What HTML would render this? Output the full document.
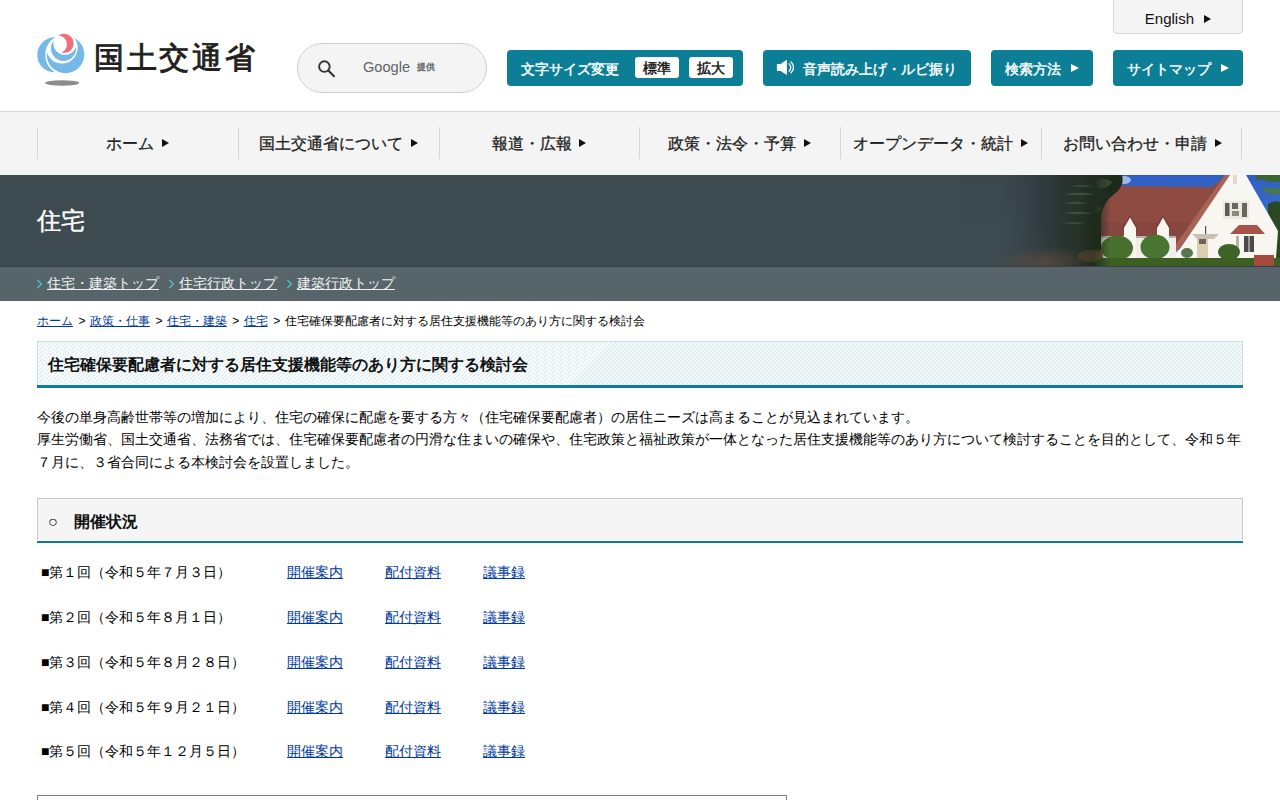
<!DOCTYPE html>
<html lang="ja"><head><meta charset="utf-8"><title>住宅確保要配慮者に対する居住支援機能等のあり方に関する検討会</title>
<style>
*{box-sizing:border-box;margin:0;padding:0}
html,body{width:1280px;height:800px;overflow:hidden;background:#fff}
body{font-family:"Liberation Sans",sans-serif;color:#222;position:relative}
a{color:#0039a0}
.abs{position:absolute}
/* header */
#hd{position:absolute;left:0;top:0;width:1280px;height:112px;border-bottom:1px solid #d6d6d6;background:#fff}
#eng{position:absolute;left:1113px;top:-1px;width:130px;height:35px;background:#f4f4f4;border:1px solid #d8d8d8;border-radius:0 0 4px 4px;font-size:15px;color:#111;text-align:center;line-height:38px}
.tri{display:inline-block;width:0;height:0;border-left:7px solid #111;border-top:4px solid transparent;border-bottom:4px solid transparent;vertical-align:middle}
#search{position:absolute;left:297px;top:43px;width:190px;height:50px;border:1px solid #cfcfcf;border-radius:25px;background:#f4f4f4}
.btn{position:absolute;top:50px;height:36px;background:#0c7e96;border-radius:4px;color:#fff;font-size:14px;font-weight:normal;-webkit-text-stroke:0.45px #fff;line-height:36px;white-space:nowrap}
.wb{position:absolute;top:7px;width:44px;height:21px;background:#fff;border-radius:3px;color:#111;-webkit-text-stroke:0.45px #111;line-height:22px;text-align:center}
/* nav */
#nav{position:absolute;left:0;top:112px;width:1280px;height:63px;background:#f4f4f4}
.sep{position:absolute;top:15px;width:1px;height:32px;background:#d4d4d4}
.ni{position:absolute;top:0;height:63px;line-height:63px;font-size:16px;color:#222;-webkit-text-stroke:0.3px #222;text-align:center;width:201px;white-space:nowrap}
/* banner */
#ban{position:absolute;left:0;top:175px;width:1280px;height:92px;background:#3d4a50;overflow:hidden}
#ban h1{position:absolute;left:37px;top:0;line-height:92px;font-size:24px;font-weight:normal;color:#fff;-webkit-text-stroke:0.4px #fff}
#sub{position:absolute;left:0;top:267px;width:1280px;height:34px;background:#57656b}
#banl{position:absolute;left:0;top:266px;width:1280px;height:1px;background:#383f46}
#sub a{color:#f2f2f2;font-size:14px;position:absolute;top:0;line-height:32px;white-space:nowrap}
#sub .ar{color:#66c4d3;font-size:14px;position:absolute;top:0;line-height:32px}
/* content */
.gt{margin-left:2.2px;margin-right:1px}
#bc{position:absolute;left:37px;top:311px;font-size:12px;line-height:20px;color:#000;white-space:nowrap}
#ttl{position:absolute;left:37px;top:341px;width:1206px;height:44px;border:1px solid #c9dfe3;border-bottom:0;
 background:repeating-linear-gradient(135deg,#e3f1f4 0,#e3f1f4 1.9px,#ffffff 1.9px,#ffffff 2.83px)}
#ttlb{position:absolute;left:37px;top:385px;width:1206px;height:3px;background:#0c7e96}
#ttl h2{position:absolute;left:10px;top:1px;line-height:43px;font-size:16px;font-weight:bold;color:#111;white-space:nowrap}
#txt{position:absolute;left:37px;top:406px;width:1210px;font-size:14px;line-height:22.4px;color:#000}
#sec{position:absolute;left:37px;top:498px;width:1206px;height:42px;background:#f5f5f5;border:1px solid #c8c8c8;border-bottom:0}
#secb{position:absolute;left:37px;top:541px;width:1206px;height:2px;background:#0c7e96}
#sec h3{position:absolute;left:10px;top:3px;line-height:40px;font-size:16px;font-weight:bold;color:#111;white-space:nowrap}
.row{position:absolute;left:41px;font-size:14px;line-height:20px;color:#000;white-space:nowrap}
.l1,.l2,.l3{position:absolute;font-size:14px;line-height:20px;white-space:nowrap}
#box{position:absolute;left:37px;top:795px;width:750px;height:60px;border:1px solid #7f7f7f}
</style></head><body>
<div id="hd">
  <div id="eng">English <span class="tri" style="margin-left:6px;margin-top:-2px"></span></div>
  <!-- logo -->
  <svg class="abs" style="left:0;top:0" width="100" height="100" viewBox="0 0 100 100">
   <defs>
    <mask id="mA"><rect width="100" height="100" fill="#fff"/><circle cx="65.9" cy="54.8" r="20.7" fill="#000"/></mask>
    <mask id="mB"><rect width="100" height="100" fill="#fff"/><circle cx="62" cy="47.8" r="15.7" fill="#000"/></mask>
    <mask id="mC"><rect width="100" height="100" fill="#fff"/><circle cx="64.96" cy="43.23" r="11.57" fill="#000"/></mask>
    <mask id="mR"><rect width="100" height="100" fill="#fff"/><circle cx="57.84" cy="44.44" r="9.08" fill="#000"/></mask>
   </defs>
   <g fill="#74b9e7">
    <circle cx="54.7" cy="54.8" r="17.5" mask="url(#mA)"/>
    <circle cx="65.5" cy="54.5" r="18.8" mask="url(#mB)"/>
    <circle cx="63.54" cy="48.43" r="12.58" mask="url(#mC)"/>
   </g>
   <circle cx="63.9" cy="43.4" r="9.7" fill="#ef6f79" mask="url(#mR)"/>
   <ellipse cx="62.2" cy="83" rx="17" ry="2.7" fill="#8c8c8c"/>
  </svg>
  <div class="abs" style="left:94px;top:38px;font-size:30px;line-height:40px;letter-spacing:2.7px;color:#231f20;-webkit-text-stroke:0.9px #231f20;white-space:nowrap">国土交通省</div>
  <div id="search">
    <svg class="abs" style="left:18px;top:14px" width="22" height="22" viewBox="0 0 22 22"><circle cx="8.4" cy="8.6" r="5.3" fill="none" stroke="#333" stroke-width="1.9"/><line x1="12.3" y1="12.6" x2="18" y2="18.2" stroke="#333" stroke-width="2.1" stroke-linecap="round"/></svg>
    <div class="abs" style="left:65px;top:12.5px;font-size:14.6px;line-height:20px;color:#5f6368">Google</div>
    <div class="abs" style="left:119px;top:16px;font-size:9.4px;line-height:14px;color:#5f6368;font-weight:bold">提供</div>
  </div>
  <div class="btn" style="left:507px;width:236px"><span class="abs" style="left:14px;top:1px">文字サイズ変更</span>
    <span class="wb" style="left:128px">標準</span><span class="wb" style="left:182px">拡大</span></div>
  <div class="btn" style="left:763px;width:208px">
    <svg class="abs" style="left:13px;top:9px" width="22" height="18" viewBox="0 0 22 18"><path d="M0.9,4.9H4.6L10.9,0.8V16L4.6,12.1H0.9Z" fill="#fff"/><path d="M13.2,4.8Q16.2,8.45 13.2,12.1M15.1,3Q20.2,8.4 15.1,13.8" fill="none" stroke="#fff" stroke-width="1.3" stroke-linecap="round"/></svg>
    <span class="abs" style="left:40px;top:1px">音声読み上げ・ルビ振り</span></div>
  <div class="btn" style="left:991px;width:102px"><span class="abs" style="left:14px;top:1px">検索方法</span><span class="tri abs" style="left:80px;top:14px;border-left-color:#fff;border-left-width:8px;border-top-width:4.5px;border-bottom-width:4.5px"></span></div>
  <div class="btn" style="left:1113px;width:130px"><span class="abs" style="left:14px;top:1px">サイトマップ</span><span class="tri abs" style="left:108px;top:14px;border-left-color:#fff;border-left-width:8px;border-top-width:4.5px;border-bottom-width:4.5px"></span></div>
</div>

<div id="nav">
  <div class="sep" style="left:37px"></div><div class="sep" style="left:238px"></div><div class="sep" style="left:439px"></div>
  <div class="sep" style="left:639px"></div><div class="sep" style="left:840px"></div><div class="sep" style="left:1041px"></div><div class="sep" style="left:1241px"></div>
  <div class="ni" style="left:37px">ホーム <span class="tri" style="margin-left:3px;margin-top:-3px"></span></div>
  <div class="ni" style="left:238px">国土交通省について <span class="tri" style="margin-left:3px;margin-top:-3px"></span></div>
  <div class="ni" style="left:439px;width:200px">報道・広報 <span class="tri" style="margin-left:3px;margin-top:-3px"></span></div>
  <div class="ni" style="left:639px">政策・法令・予算 <span class="tri" style="margin-left:3px;margin-top:-3px"></span></div>
  <div class="ni" style="left:840px">オープンデータ・統計 <span class="tri" style="margin-left:3px;margin-top:-3px"></span></div>
  <div class="ni" style="left:1042px;width:201px">お問い合わせ・申請 <span class="tri" style="margin-left:3px;margin-top:-3px"></span></div>
</div>

<div id="ban">
  <h1>住宅</h1>
  <svg class="abs" style="left:0;top:0" width="1280" height="92" viewBox="0 175 1280 92">
    <defs>
      <linearGradient id="fade" x1="0" x2="1" y1="0" y2="0"><stop offset="0" stop-color="#3d4a50" stop-opacity="1"/><stop offset="0.45" stop-color="#3d4a50" stop-opacity="0.85"/><stop offset="1" stop-color="#3d4a50" stop-opacity="0"/></linearGradient>
      <linearGradient id="blurB" x1="0" x2="0" y1="0" y2="1"><stop offset="0" stop-color="#5a4a3e" stop-opacity="0"/><stop offset="1" stop-color="#5c4b3c" stop-opacity="0.75"/></linearGradient>
      <linearGradient id="sky" x1="0" x2="0" y1="0" y2="1"><stop offset="0" stop-color="#2e5fc4"/><stop offset="0.5" stop-color="#3b6dcc"/><stop offset="1" stop-color="#6f9ad6"/></linearGradient>
      <filter id="bf" filterUnits="userSpaceOnUse" x="990" y="165" width="160" height="110"><feGaussianBlur stdDeviation="6 0.01"/></filter>
      <linearGradient id="band" x1="0" x2="1" y1="0" y2="0"><stop offset="0" stop-color="#3d4a50" stop-opacity="0"/><stop offset="0.3" stop-color="#334040"/><stop offset="0.75" stop-color="#222e20"/><stop offset="1" stop-color="#1f2b1c" stop-opacity="0"/></linearGradient>
      <linearGradient id="bandb" x1="0" x2="1" y1="0" y2="0"><stop offset="0" stop-color="#54473d" stop-opacity="0"/><stop offset="0.5" stop-color="#54473d" stop-opacity="0.45"/><stop offset="0.8" stop-color="#5a4a3a" stop-opacity="0.7"/><stop offset="1" stop-color="#5a4a3a" stop-opacity="0"/></linearGradient>
      <linearGradient id="lg1" x1="0" x2="1" y1="0" y2="0"><stop offset="0" stop-color="#3d4a50" stop-opacity="0"/><stop offset="0.2" stop-color="#3d4a50" stop-opacity="0"/><stop offset="0.55" stop-color="#303b3f"/><stop offset="0.8" stop-color="#253027"/><stop offset="0.88" stop-color="#1f2b1c"/><stop offset="1" stop-color="#1f2b1c" stop-opacity="0"/></linearGradient>
      <linearGradient id="lg2" x1="0" x2="0" y1="0" y2="1"><stop offset="0" stop-color="#2b3638" stop-opacity="0.15"/><stop offset="0.6" stop-color="#2b3638" stop-opacity="0"/></linearGradient>
      <radialGradient id="rg1"><stop offset="0" stop-color="#5e4d3e" stop-opacity="0.75"/><stop offset="1" stop-color="#5e4d3e" stop-opacity="0"/></radialGradient>
      <filter id="mb" filterUnits="userSpaceOnUse" x="1040" y="175" width="80" height="92"><feGaussianBlur stdDeviation="3 0.6"/></filter>
      <filter id="sf" filterUnits="userSpaceOnUse" x="1030" y="170" width="260" height="100"><feGaussianBlur stdDeviation="0.5"/></filter>
    </defs>
    <g filter="url(#sf)">
    <rect x="1095" y="175" width="185" height="92" fill="url(#sky)"/>
    <ellipse cx="1124" cy="180" rx="7" ry="4" fill="#c8d4ea" opacity="0.75"/>
    <!-- right tree (sparse) -->
    <path d="M1256,175 L1280,175 L1280,181 Q1272,184 1264,180 Q1259,178 1256,181 Z" fill="#3a6630"/>
    <path d="M1262,186 Q1270,190 1280,187 L1280,194 Q1270,196 1264,191 Z" fill="#4f7a3e" opacity="0.85"/>
    <path d="M1268,204 Q1275,200 1280,202 L1280,262 L1271,262 Q1273,232 1268,214 Z" fill="#2a4a24"/>
    <!-- main roof -->
    <polygon points="1101,188 1122,186 1212,187 1226,175 1240,175 1176,249 1101,236" fill="#8d4b43"/>
    <polygon points="1101,222 1200,222 1188,236 1101,236" fill="#82443d" opacity="0.7"/>
    <polygon points="1225,175 1232,175 1179,250 1172,250" fill="#a86456"/>
    <!-- white gable -->
    <polygon points="1230,175 1246,175 1278,231 1276,258 1170,258 1180,249" fill="#f8f6f1"/>
    <rect x="1233" y="175" width="4" height="9" fill="#e6d6cc"/>
    <!-- lower wall -->
    <rect x="1101" y="236" width="75" height="23" fill="#f1eee7"/>
    <rect x="1101" y="236" width="75" height="2" fill="#8f8880" opacity="0.6"/>
    <!-- dormers -->
    <polygon points="1122,228 1130,215 1138,228" fill="#7a3e37"/>
    <polygon points="1124,228 1130,217.5 1136,228 1136,258 1124,258" fill="#f8f6f1"/>
    <polygon points="1155,228 1163,215 1171,228" fill="#7a3e37"/>
    <polygon points="1157,228 1163,217.5 1169,228 1169,258 1157,258" fill="#f8f6f1"/>
    <!-- windows -->
    <rect x="1223" y="201" width="26" height="18" fill="#ece8de"/>
    <rect x="1225" y="203" width="4.5" height="13" fill="#5e5a55"/>
    <rect x="1232" y="203" width="6" height="6" fill="#6a6660"/>
    <rect x="1232" y="211" width="7" height="5" fill="#8b8780"/>
    <rect x="1242" y="203" width="5" height="14" fill="#6b665f"/>
    <!-- bay roof -->
    <polygon points="1230,234 1239,225 1257,225 1265,234" fill="#a8524a"/>
    <rect x="1244" y="236" width="10" height="16" fill="#4e4a46"/>
    <rect x="1248.5" y="236" width="1" height="16" fill="#e8e4da"/>
    <rect x="1236" y="236" width="3" height="16" fill="#b9b2a4"/>
    <!-- porch -->
    <polygon points="1192,234 1219,234 1214,239 1197,239" fill="#c9c0b0"/>
    <rect x="1205" y="226" width="1.2" height="8" fill="#555"/>
    <rect x="1197" y="239" width="11" height="19" fill="#d9cdb2"/>
    <rect x="1199" y="239" width="7" height="5" fill="#6e6456"/>
    <!-- left blur + tree -->
    <path d="M1080,175 L1122,175 Q1125,187 1113,195 Q1103,203 1101,216 L1101,258 L1080,258 Z" fill="#1f2c1c"/>
    <path d="M1096,180 Q1104,176 1112,182 Q1106,190 1098,188 Z" fill="#5d7a4a" opacity="0.45"/>
    <path d="M1094,206 Q1100,202 1101,210 Q1098,214 1094,212 Z" fill="#4e6b3c" opacity="0.4"/>
    <!-- hedges -->
    <ellipse cx="1117" cy="248" rx="16" ry="12.5" fill="#46702d"/>
    <ellipse cx="1155" cy="247" rx="14.5" ry="12.5" fill="#4a7430"/>
    <ellipse cx="1229" cy="252" rx="11" ry="8" fill="#3d6427"/>
    <ellipse cx="1187" cy="253" rx="6" ry="5" fill="#5a774b"/>
    <rect x="1077" y="249" width="26" height="14" fill="#6b5134" opacity="0.8"/>
    <rect x="1077" y="258" width="203" height="9" fill="#3e5f24"/>
    <rect x="1254" y="255" width="20" height="12" fill="#a34a3e"/>
    </g>
    <rect x="960" y="175" width="150" height="92" fill="url(#lg1)"/>
    <rect x="960" y="175" width="150" height="92" fill="url(#lg2)"/>
    <ellipse cx="1045" cy="262" rx="48" ry="16" fill="url(#rg1)"/>
    <g filter="url(#mb)" opacity="0.2">
      <ellipse cx="1080" cy="194" rx="12" ry="1.3" fill="#b9c4b2"/>
      <ellipse cx="1076" cy="203" rx="10" ry="1.2" fill="#a9b5a2"/>
      <ellipse cx="1078" cy="213" rx="12" ry="1.2" fill="#b4bfae"/>
      <ellipse cx="1074" cy="223" rx="9" ry="1.1" fill="#9aa692"/>
      <ellipse cx="1082" cy="186" rx="8" ry="1.1" fill="#a0ab98"/>
    </g>
    <ellipse cx="1090" cy="256" rx="12" ry="6" fill="#6a4e34" opacity="0.4"/>
  </svg>
</div>
<div id="banl"></div>
<div id="sub">
  <svg class="abs" style="left:36px;top:11px" width="8" height="12" viewBox="0 0 8 12"><polyline points="1.4,1.9 5.4,5.9 1.4,9.9" fill="none" stroke="#4fbccb" stroke-width="1.4"/></svg><a style="left:47px" href="#">住宅・建築トップ</a>
  <svg class="abs" style="left:168px;top:11px" width="8" height="12" viewBox="0 0 8 12"><polyline points="1.4,1.9 5.4,5.9 1.4,9.9" fill="none" stroke="#4fbccb" stroke-width="1.4"/></svg><a style="left:179px" href="#">住宅行政トップ</a>
  <svg class="abs" style="left:286px;top:11px" width="8" height="12" viewBox="0 0 8 12"><polyline points="1.4,1.9 5.4,5.9 1.4,9.9" fill="none" stroke="#4fbccb" stroke-width="1.4"/></svg><a style="left:297px" href="#">建築行政トップ</a>
</div>

<div id="bc"><a href="#">ホーム</a><span class="gt"> &gt; </span><a href="#">政策・仕事</a><span class="gt"> &gt; </span><a href="#">住宅・建築</a><span class="gt"> &gt; </span><a href="#">住宅</a><span class="gt"> &gt; </span>住宅確保要配慮者に対する居住支援機能等のあり方に関する検討会</div>
<div id="ttl"><h2>住宅確保要配慮者に対する居住支援機能等のあり方に関する検討会</h2></div><div id="ttlb"></div>
<div id="txt">今後の単身高齢世帯等の増加により、住宅の確保に配慮を要する方々（住宅確保要配慮者）の居住ニーズは高まることが見込まれています。<br>厚生労働省、国土交通省、法務省では、住宅確保要配慮者の円滑な住まいの確保や、住宅政策と福祉政策が一体となった居住支援機能等のあり方について検討することを目的として、令和５年７月に、３省合同による本検討会を設置しました。</div>
<div id="sec"><h3>○　開催状況</h3></div><div id="secb"></div>

<div class="row" style="top:562px">■第１回（令和５年７月３日）</div>
<div class="row" style="top:607px">■第２回（令和５年８月１日）</div>
<div class="row" style="top:652px">■第３回（令和５年８月２８日）</div>
<div class="row" style="top:697px">■第４回（令和５年９月２１日）</div>
<div class="row" style="top:741px">■第５回（令和５年１２月５日）</div>
<div class="l1" style="left:287px;top:562px"><a href="#">開催案内</a></div><div class="l2" style="left:385px;top:562px"><a href="#">配付資料</a></div><div class="l3" style="left:483px;top:562px"><a href="#">議事録</a></div>
<div class="l1" style="left:287px;top:607px"><a href="#">開催案内</a></div><div class="l2" style="left:385px;top:607px"><a href="#">配付資料</a></div><div class="l3" style="left:483px;top:607px"><a href="#">議事録</a></div>
<div class="l1" style="left:287px;top:652px"><a href="#">開催案内</a></div><div class="l2" style="left:385px;top:652px"><a href="#">配付資料</a></div><div class="l3" style="left:483px;top:652px"><a href="#">議事録</a></div>
<div class="l1" style="left:287px;top:697px"><a href="#">開催案内</a></div><div class="l2" style="left:385px;top:697px"><a href="#">配付資料</a></div><div class="l3" style="left:483px;top:697px"><a href="#">議事録</a></div>
<div class="l1" style="left:287px;top:741px"><a href="#">開催案内</a></div><div class="l2" style="left:385px;top:741px"><a href="#">配付資料</a></div><div class="l3" style="left:483px;top:741px"><a href="#">議事録</a></div>
<div id="box"></div>
</body></html>
